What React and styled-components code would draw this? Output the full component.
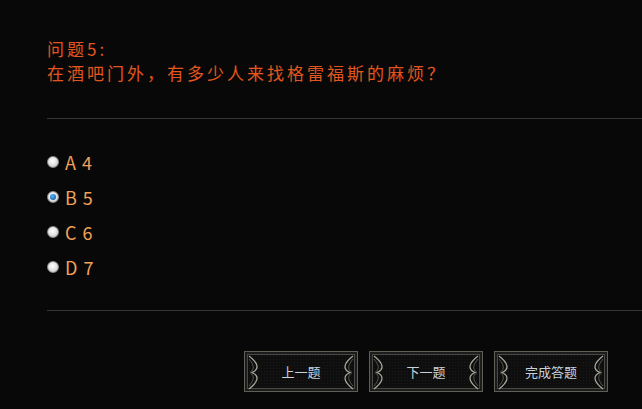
import React, { useState } from "react";
import styled, { createGlobalStyle } from "styled-components";

const GlobalStyle = createGlobalStyle`
	html, body {
		margin: 0;
		padding: 0;
		background: #080808;
	}
	body {
		font-family: "Noto Sans CJK SC", "Liberation Sans", sans-serif;
	}
`;

const StyledQuiz = styled.div`
	width: 642px;
	height: 409px;
	box-sizing: border-box;
	padding: 37px 0 0 47px;
	background: #080808;
	overflow: hidden;
`;

const Question = styled.div`
	color: #e2561f;
	font-size: 17px;
	line-height: 24px;
	letter-spacing: 3px;
	padding-bottom: 33px;
	border-bottom: 1px solid #353535;
`;

const OptionList = styled.div`
	display: flex;
	flex-direction: column;
	gap: 13px;
	padding: 32px 0 32px;
	border-bottom: 1px solid #353535;
`;

const Option = styled.label`
	display: flex;
	align-items: center;
	gap: 6px;
	height: 22px;
	color: #f2a25a;
	font-size: 18px;
	letter-spacing: 1px;
	cursor: pointer;
`;

const Radio = styled.span`
	width: 12px;
	height: 12px;
	border-radius: 50%;
	box-sizing: border-box;
	border: 1px solid #8a8a8a;
	background: radial-gradient(circle at 45% 40%, #ffffff 0%, #e6e6e6 45%, #b8b8b8 100%);
	display: flex;
	align-items: center;
	justify-content: center;

	&::after {
		content: "";
		width: 6px;
		height: 6px;
		border-radius: 50%;
		background: radial-gradient(circle at 40% 35%, #5cb4f0 0%, #1a6cb8 70%, #0d4a88 100%);
		display: ${(p) => (p.$checked ? "block" : "none")};
	}
`;

const Buttons = styled.div`
	display: flex;
	justify-content: flex-end;
	gap: 11px;
	padding: 40px 34px 0 0;
`;

const FrameButton = styled.button`
	position: relative;
	width: 114px;
	height: 41px;
	padding: 0;
	border: 1px solid #5f5f58;
	background: radial-gradient(circle, #1a1a1a 0.6px, transparent 0.8px) 0 0 / 3px 3px, #0e0e0e;
	box-shadow: inset 0 0 0 2px #1c1c1c, inset 0 0 0 3px #4a4a44;
	color: #c9d2dc;
	font-family: "Noto Sans CJK SC", sans-serif;
	font-size: 13px;
	cursor: pointer;

	svg {
		position: absolute;
		top: 3px;
		height: 35px;
		width: 14px;
	}
	svg.left {
		left: 3px;
	}
	svg.right {
		right: 3px;
		transform: scaleX(-1);
	}
`;

const Ornament = ({ className }) => (
	<svg className={className} viewBox="0 0 14 35">
		<path d="M1 1 C 10 8, 12 14, 4 17.5 C 12 21, 10 27, 1 34" fill="none" stroke="#a8a89c" strokeWidth="1.3" />
		<path d="M1 4 C 6 10, 7 14, 2 17.5 C 7 21, 6 25, 1 31" fill="none" stroke="#55554e" strokeWidth="1" />
	</svg>
);

const options = ["A 4", "B 5", "C 6", "D 7"];

const App = () => {
	const [selected, setSelected] = useState(1);

	return (
		<>
			<GlobalStyle />
			<StyledQuiz>
				<Question>
					<div>问题5:</div>
					<div>在酒吧门外，有多少人来找格雷福斯的麻烦？</div>
				</Question>
				<OptionList>
					{options.map((opt, index) => (
						<Option key={opt} onClick={() => setSelected(index)}>
							<Radio $checked={selected === index} />
							{opt}
						</Option>
					))}
				</OptionList>
				<Buttons>
					{["上一题", "下一题", "完成答题"].map((label) => (
						<FrameButton key={label} type="button">
							<Ornament className="left" />
							{label}
							<Ornament className="right" />
						</FrameButton>
					))}
				</Buttons>
			</StyledQuiz>
		</>
	);
};

export default App;
